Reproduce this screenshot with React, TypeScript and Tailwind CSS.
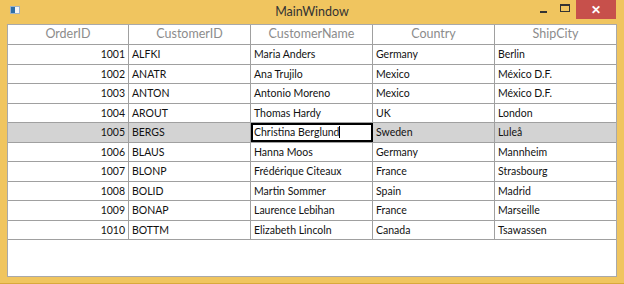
import React from 'react';

const rows = [
  ['1001', 'ALFKI', 'Maria Anders', 'Germany', 'Berlin'],
  ['1002', 'ANATR', 'Ana Trujilo', 'Mexico', 'México D.F.'],
  ['1003', 'ANTON', 'Antonio Moreno', 'Mexico', 'México D.F.'],
  ['1004', 'AROUT', 'Thomas Hardy', 'UK', 'London'],
  ['1005', 'BERGS', 'Christina Berglund', 'Sweden', 'Luleå'],
  ['1006', 'BLAUS', 'Hanna Moos', 'Germany', 'Mannheim'],
  ['1007', 'BLONP', 'Frédérique Citeaux', 'France', 'Strasbourg'],
  ['1008', 'BOLID', 'Martin Sommer', 'Spain', 'Madrid'],
  ['1009', 'BONAP', 'Laurence Lebihan', 'France', 'Marseille'],
  ['1010', 'BOTTM', 'Elizabeth Lincoln', 'Canada', 'Tsawassen'],
];

const headers = ['OrderID', 'CustomerID', 'CustomerName', 'Country', 'ShipCity'];

const cols = 'grid grid-cols-[121px_122px_122px_122px_121px]';

export default function App() {
  return (
    <div
      className="w-[624px] h-[284px] bg-[#f0c55f] flex flex-col overflow-hidden border-b border-[#d9a93c]"
      style={{ fontFamily: 'Lato, "Open Sans", sans-serif' }}
    >
      {/* Title bar */}
      <div className="h-[24px] flex items-start relative shrink-0">
        <div className="absolute left-[10px] top-[6px] w-[10px] h-[8px] bg-[#f5f5f5] border border-[#9fb3c8] flex">
          <div className="w-[4px] h-full bg-[#2f6fa8]" />
        </div>
        <div className="flex-1 text-center text-[12.5px] leading-[24px] text-[#333]">MainWindow</div>
        <div className="absolute right-[8px] top-0 flex items-start">
          <div className="w-[22px] h-[19px] flex items-center justify-center">
            <div className="w-[7px] h-[2px] bg-[#333] mt-[4px]" />
          </div>
          <div className="w-[22px] h-[19px] flex items-center justify-center">
            <div className="w-[10px] h-[8px] border border-[#333] border-t-2 -mt-[4px]" />
          </div>
          <div className="w-[40px] h-[19px] bg-[#c7504b] flex items-center justify-center text-white text-[12px] font-bold leading-none">
            ✕
          </div>
        </div>
      </div>

      {/* Content */}
      <div className="mx-[7px] h-[253px] bg-white border border-[#a9a9a9] text-[10.5px]">
        <div className={`${cols} h-[20px] border-b border-[#a0a0a0] text-[12.5px] text-[#8c8c8c]`}>
          {headers.map((h, i) => (
            <div
              key={h}
              className={`flex items-center justify-center leading-none ${i < 4 ? 'border-r border-[#a0a0a0]' : ''}`}
            >
              {h}
            </div>
          ))}
        </div>
        {rows.map((r) => {
          const selected = r[0] === '1005';
          return (
            <div
              key={r[0]}
              className={`${cols} h-[19.5px] border-b border-[#a0a0a0] text-[#111] ${selected ? 'bg-[#d3d3d3]' : ''}`}
            >
              {r.map((c, i) => {
                const editing = selected && i === 2;
                return (
                  <div
                    key={i}
                    className={`flex items-center px-[3px] whitespace-nowrap leading-none ${i === 0 ? 'justify-end' : ''} ${
                      i < 4 ? 'border-r border-[#a0a0a0]' : ''
                    } ${editing ? 'bg-white outline-2 outline-black -outline-offset-2' : ''}`}
                  >
                    {c}
                    {editing && <span className="w-px h-[12px] bg-black" />}
                  </div>
                );
              })}
            </div>
          );
        })}
      </div>
    </div>
  );
}
